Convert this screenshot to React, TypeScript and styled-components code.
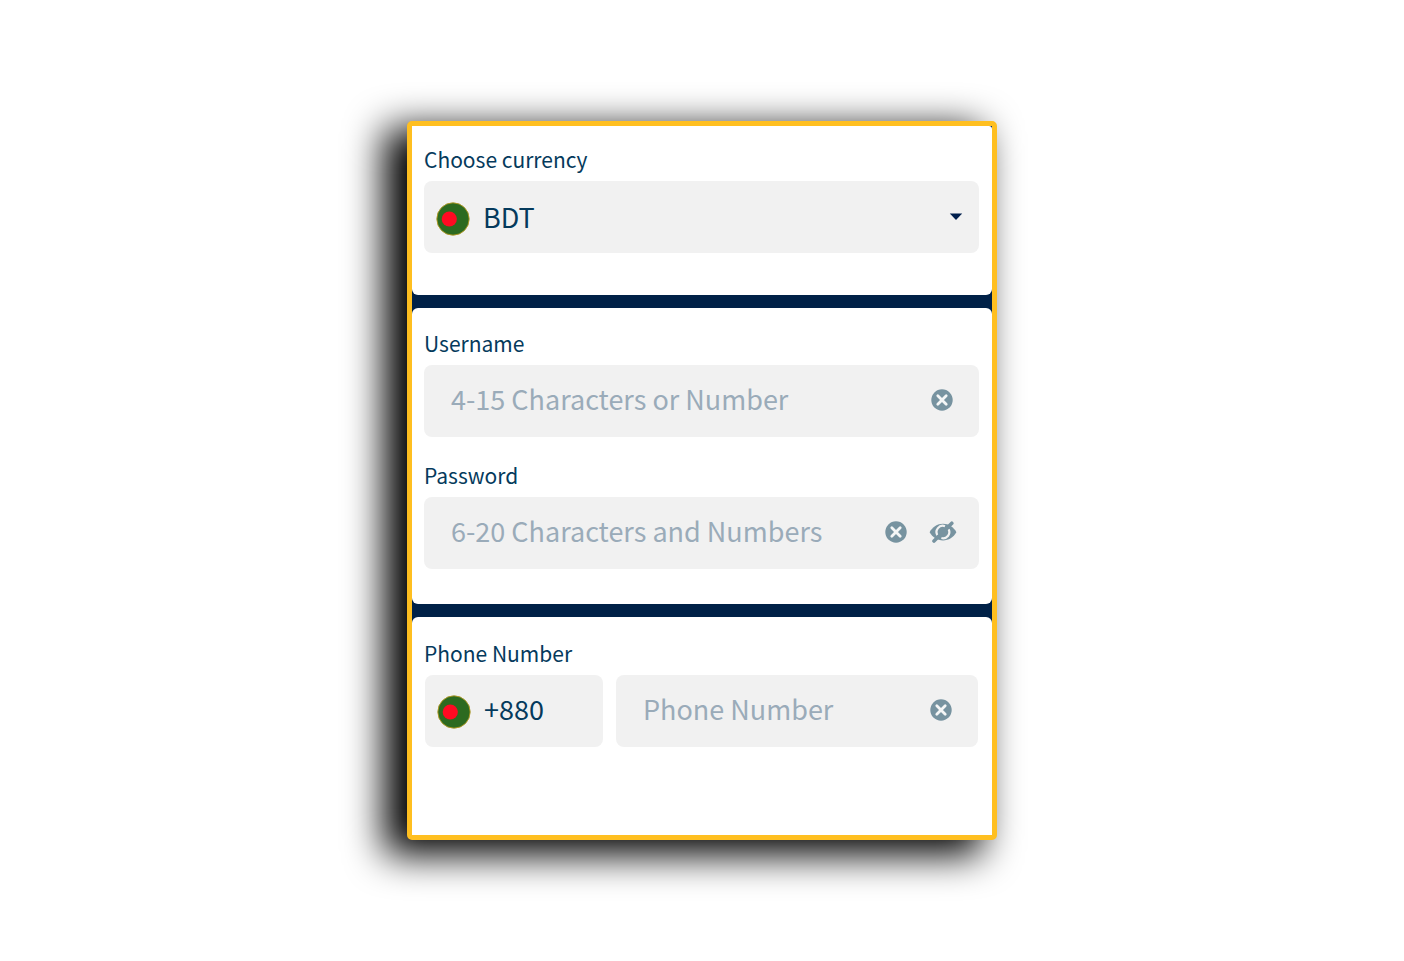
import { useState } from "react";
import styled, { createGlobalStyle } from "styled-components";

const GlobalStyle = createGlobalStyle`
  *, *::before, *::after { box-sizing: border-box; }
  body { margin: 0; background: #fff; }
  body, input, select, button { font-family: "Noto Sans CJK SC", "Noto Sans", sans-serif; }
`;

const Page = styled.main`
  min-height: 100vh;
  padding: 48px 24px;
  display: flex;
  align-items: center;
  justify-content: center;
`;

const Card = styled.form`
  width: 100%;
  max-width: 590px;
  display: flex;
  flex-direction: column;
  gap: 13px;
  border: 5px solid #ffbf20;
  border-radius: 5px;
  background: #002147;
  box-shadow: -19px 11px 38px 4px #000;
`;

const Section = styled.section<{ $top: number; $bottom: number }>`
  padding: ${(p) => p.$top}px 13px ${(p) => p.$bottom}px 12px;
  display: flex;
  flex-direction: column;
  gap: 26px;
  border-radius: 6px;
  background: #fff;
  &:first-child { border-top-left-radius: 0; border-top-right-radius: 3px; }
  &:last-child { border-bottom-left-radius: 0; border-bottom-right-radius: 0; }
`;

const Group = styled.div`
  display: flex;
  flex-direction: column;
  gap: 10px;
`;

const Label = styled.label`
  font-size: 21px;
  line-height: 24px;
  color: #053a5c;
`;

const Field = styled.div<{ $start: number; $end: number; $bottom?: number }>`
  flex: 1;
  min-width: 0;
  min-height: 72px;
  padding: 0 ${(p) => p.$end}px ${(p) => p.$bottom ?? 2}px ${(p) => p.$start}px;
  display: flex;
  align-items: center;
  border-radius: 8px;
  background: #f1f1f1;
`;

const PhoneRow = styled.div`
  margin: 0 1px;
  display: grid;
  grid-template-columns: 178px 1fr;
  gap: 13px;
`;

const Input = styled.input`
  flex: 1;
  min-width: 0;
  height: 40px;
  margin-bottom: 4px;
  padding: 0;
  border: 0;
  outline: 0;
  background: transparent;
  font-size: 27px;
  color: #053a5c;
  &::placeholder { color: #9aabb9; opacity: 1; }
`;

const Select = styled.select`
  flex: 1;
  min-width: 0;
  height: 40px;
  padding: 0;
  border: 0;
  outline: 0;
  appearance: none;
  background: transparent;
  font-size: 27px;
  line-height: 40px;
  color: #053a5c;
`;

const Actions = styled.div`
  display: flex;
  align-items: center;
  gap: 22px;
`;

const IconButton = styled.button`
  padding: 0;
  border: 0;
  display: flex;
  background: transparent;
  color: #7793a0;
  cursor: pointer;
`;

const FlagIcon = styled.svg`
  flex: none;
  margin: 4px 13px 0 0;
`;

const CaretIcon = styled.svg`
  flex: none;
  pointer-events: none;
`;

const Flag = () => (
  <FlagIcon width="34" height="34" viewBox="0 0 34 34" aria-hidden="true">
    <circle cx="17" cy="17" r="16.2" fill="#2c6a20" stroke="#b79b22" strokeWidth="0.9" />
    <circle cx="13.3" cy="17" r="7.6" fill="#ff0a22" />
  </FlagIcon>
);

const ClearButton = ({ label, onClick }: { label: string; onClick: () => void }) => (
  <IconButton type="button" aria-label={label} onClick={onClick}>
    <svg width="22" height="22" viewBox="0 0 22 22" aria-hidden="true">
      <circle cx="11" cy="11" r="10.7" fill="currentColor" />
      <path d="M6.8 6.8 15.2 15.2M15.2 6.8 6.8 15.2" stroke="#f4f6f6" strokeWidth="2.8" strokeLinecap="round" />
    </svg>
  </IconButton>
);

const EyeOff = () => (
  <svg width="28" height="22" viewBox="0 0 28 22" aria-hidden="true">
    <path d="M.6 11.2C3.5 6 8.300 2.800 14 2.800S24.500 6 27.400 11.200C24.500 16.200 19.700 19.400 14 19.400S3.500 16.200 .6 11.200Z" fill="currentColor" />
    <path d="M8.600 14.400A6.200 6.200 0 0 1 16 5.200" fill="none" stroke="#f1f1f1" strokeWidth="2.200" />
    <path d="M19.600 8.200A6.200 6.200 0 0 1 12.400 17" fill="none" stroke="#f1f1f1" strokeWidth="2.200" />
    <path d="M13.200 11.200 17 7.400" stroke="#f1f1f1" strokeWidth="1" />
    <path d="M5 20 22.800 2.200" stroke="currentColor" strokeWidth="3.600" strokeLinecap="round" />
  </svg>
);

export default function App() {
  const [username, setUsername] = useState("");
  const [password, setPassword] = useState("");
  const [phone, setPhone] = useState("");
  const [visible, setVisible] = useState(false);

  return (
    <>
      <GlobalStyle />
      <Page>
        <Card>
          <Section $top={21} $bottom={42}>
            <Group>
              <Label htmlFor="currency">Choose currency</Label>
              <Field $start={12} $end={16} $bottom={0}>
                <Flag />
                <Select id="currency" defaultValue="BDT">
                  <option value="BDT">BDT</option>
                </Select>
                <CaretIcon width="14" height="8" viewBox="0 0 14 8" aria-hidden="true">
                  <path d="M.8.5H13.200L7 7Z" fill="#001f4d" />
                </CaretIcon>
              </Field>
            </Group>
          </Section>
          <Section $top={23} $bottom={35}>
            <Group>
              <Label htmlFor="username">Username</Label>
              <Field $start={27} $end={26}>
                <Input id="username" placeholder="4-15 Characters or Number" value={username} onChange={(e) => setUsername(e.target.value)} />
                <ClearButton label="Clear username" onClick={() => setUsername("")} />
              </Field>
            </Group>
            <Group>
              <Label htmlFor="password">Password</Label>
              <Field $start={27} $end={22}>
                <Input id="password" type={visible ? "text" : "password"} placeholder="6-20 Characters and Numbers" value={password} onChange={(e) => setPassword(e.target.value)} />
                <Actions>
                  <ClearButton label="Clear password" onClick={() => setPassword("")} />
                  <IconButton type="button" aria-label="Toggle password visibility" onClick={() => setVisible(!visible)}>
                    <EyeOff />
                  </IconButton>
                </Actions>
              </Field>
            </Group>
          </Section>
          <Section $top={24} $bottom={88}>
            <Group>
              <Label htmlFor="phone">Phone Number</Label>
              <PhoneRow>
                <Field $start={12} $end={12}>
                  <Flag />
                  <Input aria-label="Country code" defaultValue="+880" />
                </Field>
                <Field $start={27} $end={26}>
                  <Input id="phone" type="tel" placeholder="Phone Number" value={phone} onChange={(e) => setPhone(e.target.value)} />
                  <ClearButton label="Clear phone number" onClick={() => setPhone("")} />
                </Field>
              </PhoneRow>
            </Group>
          </Section>
        </Card>
      </Page>
    </>
  );
}
